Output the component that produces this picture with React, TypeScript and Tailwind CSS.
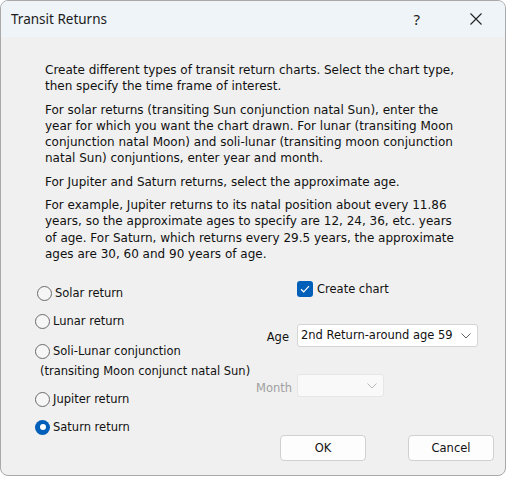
import React, { useState } from 'react';

type ReturnType = 'solar' | 'lunar' | 'soli' | 'jupiter' | 'saturn';

const bodyFont = { fontFamily: '"DejaVu Sans", Verdana, sans-serif' };

const Radio: React.FC<{ checked: boolean; onClick: () => void; children: React.ReactNode; className?: string }> = ({ checked, onClick, children, className }) => (
    <div onClick={onClick} className={`flex items-center h-[20px] cursor-default ${className ?? ''}`}>
        {checked ? (
            <span className="w-[15px] h-[15px] rounded-full bg-[#005fb8] flex items-center justify-center shrink-0">
                <span className="w-[6px] h-[6px] rounded-full bg-white" />
            </span>
        ) : (
            <span className="w-[15px] h-[15px] rounded-full border border-[#6b6b6b] bg-[#f6f6f6] shrink-0" />
        )}
        <span className="ml-[3px] whitespace-nowrap">{children}</span>
    </div>
);

const Chevron: React.FC<{ color: string }> = ({ color }) => (
    <svg width="10" height="6" viewBox="0 0 10 6" fill="none">
        <path d="M0.5 0.5 L5 5 L9.5 0.5" stroke={color} strokeWidth="1" />
    </svg>
);

export default function App() {
    const [type, setType] = useState<ReturnType>('saturn');
    const [createChart, setCreateChart] = useState(true);

    return (
        <div className="w-[507px] h-[477px] bg-white">
            <div className="w-[506px] h-[476px] rounded-[8px] border border-[#a9a9a9] overflow-hidden flex flex-col bg-[#f0f0f0]">
                {/* Title bar */}
                <div className="h-[36px] bg-[#eef4f8] flex items-center shrink-0 text-[#1b1b1b]" style={{ fontFamily: '"Noto Sans", "Open Sans", sans-serif' }}>
                    <span className="ml-[10px] text-[13.5px]">Transit Returns</span>
                    <span className="ml-auto mr-[50px] text-[15px] leading-none">?</span>
                    <svg width="12" height="12" viewBox="0 0 12 12" className="mr-[23px]">
                        <path d="M0.5 0.5 L11.5 11.5 M11.5 0.5 L0.5 11.5" stroke="#222" strokeWidth="1.1" />
                    </svg>
                </div>

                {/* Body */}
                <div className="flex-1 text-[11.5px] text-[#111]" style={bodyFont}>
                    <div className="pl-[44px] pt-[25px] text-[12px] leading-[16.3px] whitespace-nowrap flex flex-col gap-[7px]">
                        <p>
                            Create different types of transit return charts. Select the chart type,<br />
                            then specify the time frame of interest.
                        </p>
                        <p>
                            For solar returns (transiting Sun conjunction natal Sun), enter the<br />
                            year for which you want the chart drawn. For lunar (transiting Moon<br />
                            conjunction natal Moon) and soli-lunar (transiting moon conjunction<br />
                            natal Sun) conjuntions, enter year and month.
                        </p>
                        <p>For Jupiter and Saturn returns, select the approximate age.</p>
                        <p>
                            For example, Jupiter returns to its natal position about every 11.86<br />
                            years, so the approximate ages to specify are 12, 24, 36, etc. years<br />
                            of age. For Saturn, which returns every 29.5 years, the approximate<br />
                            ages are 30, 60 and 90 years of age.
                        </p>
                    </div>

                    <div className="flex mt-[19px]">
                        {/* Chart type radios */}
                        <div className="w-[255px] pl-[34px] pt-[2px] flex flex-col">
                            <Radio checked={type === 'solar'} onClick={() => setType('solar')} className="ml-[2px]">Solar return</Radio>
                            <Radio checked={type === 'lunar'} onClick={() => setType('lunar')} className="mt-[8px]">Lunar return</Radio>
                            <Radio checked={type === 'soli'} onClick={() => setType('soli')} className="mt-[10px]">Soli-Lunar conjunction</Radio>
                            <div className="h-[20px] flex items-center pl-[5px] whitespace-nowrap">(transiting Moon conjunct natal Sun)</div>
                            <Radio checked={type === 'jupiter'} onClick={() => setType('jupiter')} className="mt-[8px]">Jupiter return</Radio>
                            <Radio checked={type === 'saturn'} onClick={() => setType('saturn')} className="mt-[8px]">Saturn return</Radio>
                        </div>

                        {/* Options */}
                        <div className="flex flex-col">
                            <div onClick={() => setCreateChart(!createChart)} className="flex items-center h-[16px] pl-[41px]">
                                <span className={`w-[16px] h-[16px] rounded-[3px] flex items-center justify-center ${createChart ? 'bg-[#005fb8]' : 'border border-[#6b6b6b] bg-[#f6f6f6]'}`}>
                                    {createChart && (
                                        <svg width="10" height="8" viewBox="0 0 10 8" fill="none">
                                            <path d="M1 4.2 L3.7 6.8 L9 1.2" stroke="white" strokeWidth="1.2" />
                                        </svg>
                                    )}
                                </span>
                                <span className="ml-[4px]">Create chart</span>
                            </div>

                            <div className="flex items-center mt-[27px]">
                                <span className="w-[41px] pr-[8px] text-right pt-[4px]">Age</span>
                                <div className="w-[181px] h-[23px] bg-white border border-[#d4d4d4] rounded-[3px] flex items-center pl-[3px] pr-[6px]">
                                    <span className="whitespace-nowrap">2nd Return-around age 59</span>
                                    <span className="ml-auto flex"><Chevron color="#606060" /></span>
                                </div>
                            </div>

                            <div className="flex items-center mt-[27px]">
                                <span className="w-[41px] pr-[6px] text-right pt-[5px] text-[#a0a0a0]">Month</span>
                                <div className="w-[87px] h-[23px] bg-[#f9f9f9] border border-[#e6e6e6] rounded-[3px] flex items-center pr-[6px]">
                                    <span className="ml-auto flex"><Chevron color="#b8b8b8" /></span>
                                </div>
                            </div>

                            <div className="flex mt-[38px] ml-[24px] gap-[42px]">
                                <button type="button" className="w-[86px] h-[26px] bg-[#fdfdfd] border border-[#d0d0d0] rounded-[4px] text-[11.5px] text-[#111]">
                                    OK
                                </button>
                                <button type="button" className="w-[86px] h-[26px] bg-[#fdfdfd] border border-[#d0d0d0] rounded-[4px] text-[11.5px] text-[#111]">
                                    Cancel
                                </button>
                            </div>
                        </div>
                    </div>
                </div>
            </div>
        </div>
    );
}
